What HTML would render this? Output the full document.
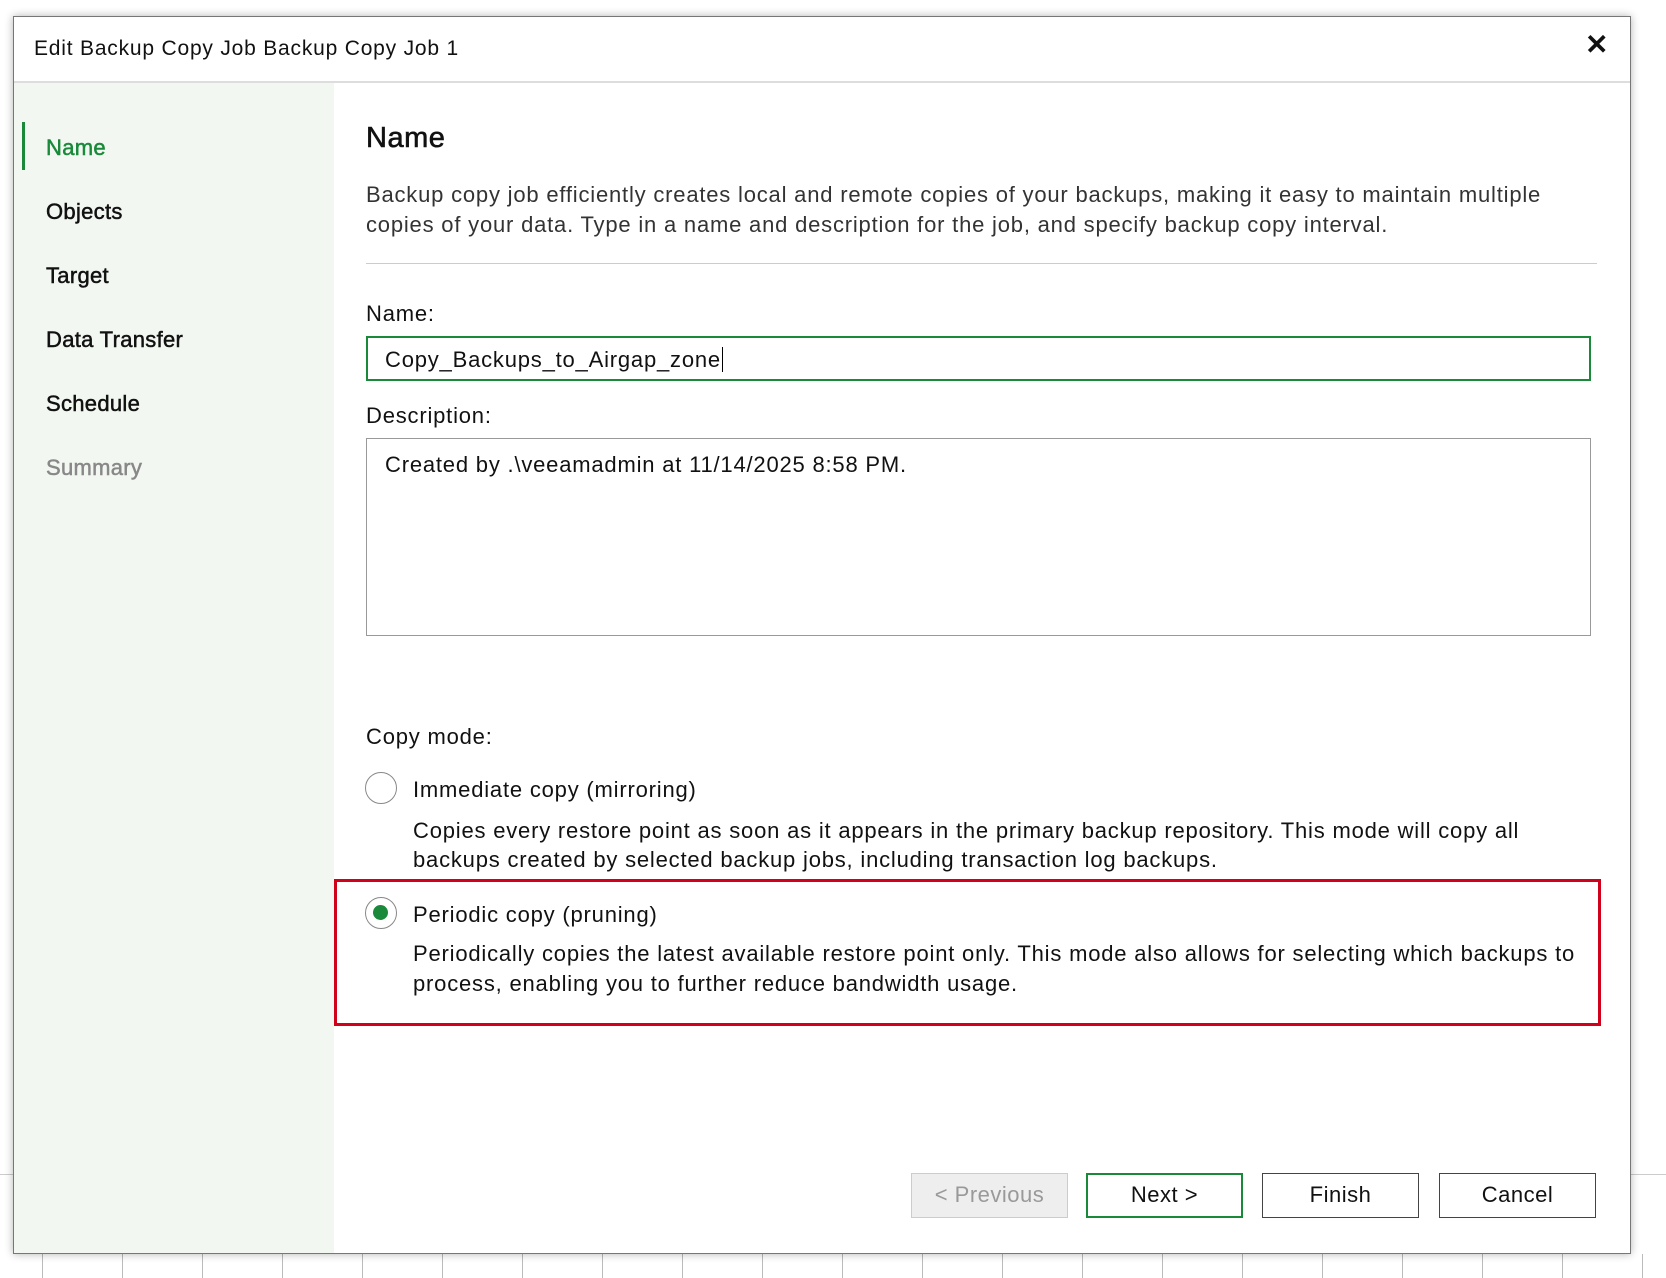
<!DOCTYPE html>
<html><head><meta charset="utf-8"><style>
body{margin:0;width:1666px;height:1278px;background:#fff;position:relative;overflow:hidden;font-family:"Liberation Sans",sans-serif;color:#111}
.a{position:absolute;white-space:nowrap}
.vl{position:absolute;top:1254px;height:24px;width:1px;background:#bbb}
.btn{position:absolute;top:1173px;height:45px;width:157px;border:1.5px solid #444;box-sizing:border-box;background:#fff;text-align:center;line-height:42px;font-size:22px;letter-spacing:.5px}
.nav{position:absolute;left:46px;font-size:22px;color:#111;-webkit-text-stroke:.5px;letter-spacing:.3px}
.t{font-size:22px;letter-spacing:.8px}
.radio{position:absolute;width:32px;height:32px;border:1.5px solid #888;border-radius:50%;box-sizing:border-box;background:#fff}
</style></head><body>
<div style="position:absolute;left:0;top:1174px;width:1666px;height:1px;background:#ccc"></div>
<div class="vl" style="left:42px"></div><div class="vl" style="left:122px"></div><div class="vl" style="left:202px"></div><div class="vl" style="left:282px"></div><div class="vl" style="left:362px"></div><div class="vl" style="left:442px"></div><div class="vl" style="left:522px"></div><div class="vl" style="left:602px"></div><div class="vl" style="left:682px"></div><div class="vl" style="left:762px"></div><div class="vl" style="left:842px"></div><div class="vl" style="left:922px"></div><div class="vl" style="left:1002px"></div><div class="vl" style="left:1082px"></div><div class="vl" style="left:1162px"></div><div class="vl" style="left:1242px"></div><div class="vl" style="left:1322px"></div><div class="vl" style="left:1402px"></div><div class="vl" style="left:1482px"></div><div class="vl" style="left:1562px"></div><div class="vl" style="left:1642px"></div>
<div style="position:absolute;left:13px;top:16px;width:1618px;height:1238px;background:#fff;border:1.5px solid #777;box-sizing:border-box;box-shadow:0 0 8px rgba(0,0,0,.3)">
</div>
<div class="a" style="left:34px;top:37px;font-size:21px;letter-spacing:.8px">Edit Backup Copy Job Backup Copy Job 1</div>
<div class="a" style="left:1585px;top:28px;font-size:28px;font-weight:bold">✕</div>
<div style="position:absolute;left:14px;top:81px;width:1616px;height:2px;background:#ddd"></div>
<div style="position:absolute;left:14px;top:83px;width:320px;height:1170px;background:#f3f7f2"></div>
<div style="position:absolute;left:22px;top:122px;width:3px;height:48px;background:#1a8a3a"></div>
<div class="nav" style="top:135px;color:#1a8a3a">Name</div>
<div class="nav" style="top:199px">Objects</div>
<div class="nav" style="top:263px">Target</div>
<div class="nav" style="top:327px">Data Transfer</div>
<div class="nav" style="top:391px">Schedule</div>
<div class="nav" style="top:455px;color:#888">Summary</div>
<div class="a" style="left:366px;top:122px;font-size:29px;-webkit-text-stroke:.6px;letter-spacing:.5px">Name</div>
<div class="a t" style="left:366px;top:182px;color:#333">Backup copy job efficiently creates local and remote copies of your backups, making it easy to maintain multiple</div>
<div class="a t" style="left:366px;top:212px;color:#333">copies of your data. Type in a name and description for the job, and specify backup copy interval.</div>
<div style="position:absolute;left:366px;top:263px;width:1231px;height:1px;background:#ccc"></div>
<div class="a t" style="left:366px;top:301px">Name:</div>
<div style="position:absolute;left:366px;top:336px;width:1225px;height:45px;border:2px solid #1a8a3a;box-sizing:border-box"></div>
<div class="a t" style="left:385px;top:347px">Copy_Backups_to_Airgap_zone<span style="border-left:1px solid #000;margin-left:1px"></span></div>
<div class="a t" style="left:366px;top:403px">Description:</div>
<div style="position:absolute;left:366px;top:438px;width:1225px;height:198px;border:1.5px solid #999;box-sizing:border-box"></div>
<div class="a t" style="left:385px;top:452px">Created by .\veeamadmin at 11/14/2025 8:58 PM.</div>
<div class="a t" style="left:366px;top:724px">Copy mode:</div>
<div class="radio" style="left:365px;top:772px"></div>
<div class="a t" style="left:413px;top:777px">Immediate copy (mirroring)</div>
<div class="a t" style="left:413px;top:818px">Copies every restore point as soon as it appears in the primary backup repository. This mode will copy all</div>
<div class="a t" style="left:413px;top:847px">backups created by selected backup jobs, including transaction log backups.</div>
<div style="position:absolute;left:334px;top:879px;width:1267px;height:147px;border:3px solid #d0021b;box-sizing:border-box"></div>
<div class="radio" style="left:365px;top:897px"><div style="position:absolute;left:7px;top:7px;width:15px;height:15px;border-radius:50%;background:#1a8a3a"></div></div>
<div class="a t" style="left:413px;top:902px">Periodic copy (pruning)</div>
<div class="a t" style="left:413px;top:941px">Periodically copies the latest available restore point only. This mode also allows for selecting which backups to</div>
<div class="a t" style="left:413px;top:971px">process, enabling you to further reduce bandwidth usage.</div>
<div class="btn" style="left:911px;background:#eee;border-color:#ccc;color:#999">&lt; Previous</div>
<div class="btn" style="left:1086px;border:2.5px solid #1a8a3a;line-height:40px">Next &gt;</div>
<div class="btn" style="left:1262px">Finish</div>
<div class="btn" style="left:1439px">Cancel</div>
</body></html>
